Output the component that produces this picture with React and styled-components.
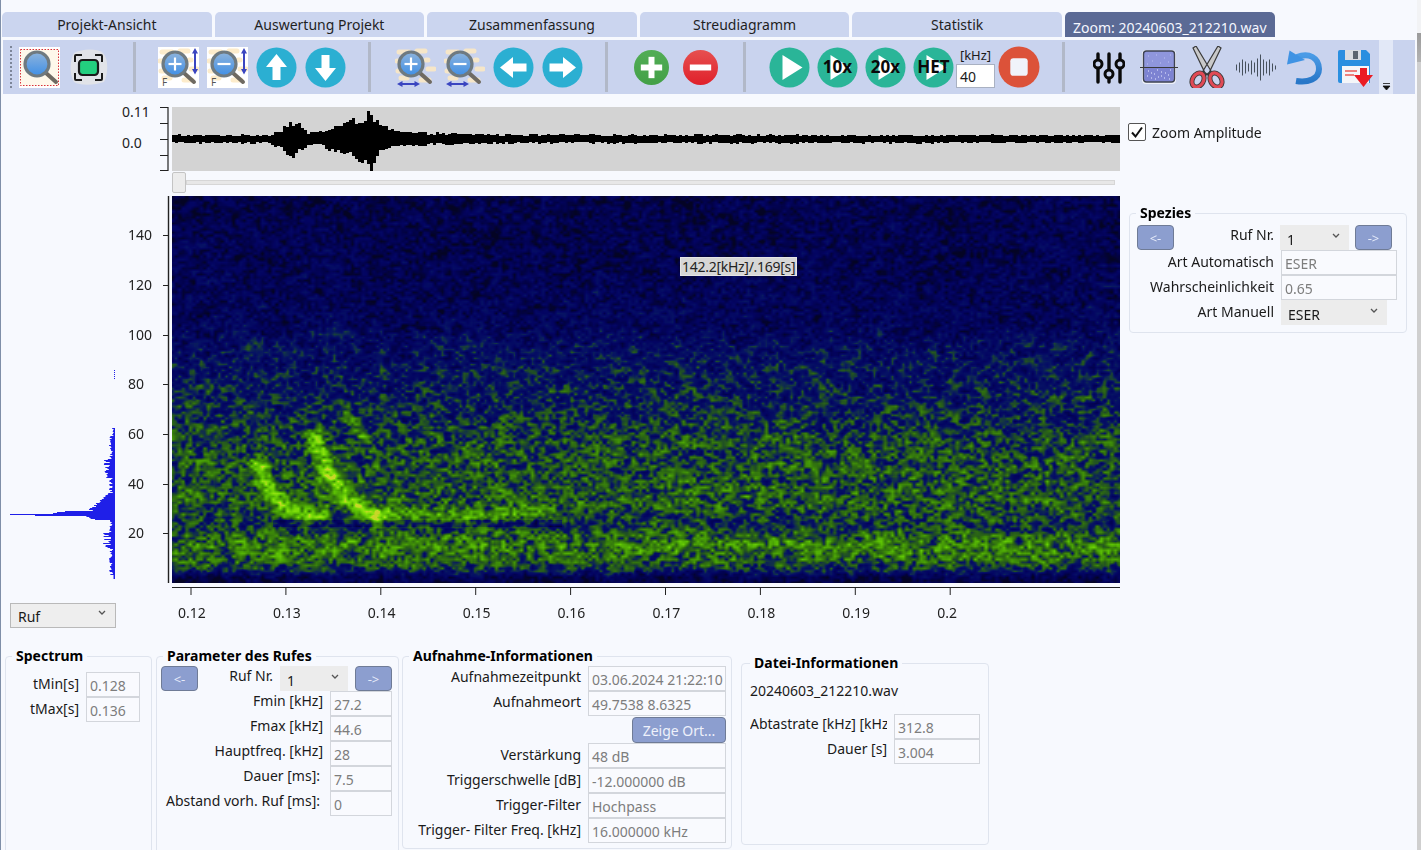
import React, { useEffect, useRef } from 'react'
import styled, { createGlobalStyle } from 'styled-components'

const GlobalStyle = createGlobalStyle`
  html, body {
    margin: 0;
    padding: 0;
    background: #f7f9fe;
  }
  * {
    box-sizing: border-box;
  }
`

const Page = styled.div`
  width: 1421px;
  height: 850px;
  overflow: hidden;
  display: flex;
`

const Win = styled.div`
  width: 1417px;
  height: 850px;
  overflow: hidden;
  display: flex;
  flex-direction: column;
  background: #f7f9fe;
  border-left: 1px solid #7f8fa8;
  font-family: "Noto Sans", "Open Sans", sans-serif;
  font-size: 14px;
  color: #1a1a1a;
`

const BackWindow = styled.div`
  flex: 1;
  background: linear-gradient(#f2f3f5 0, #f2f3f5 33px, #9b9b9b 33px, #b3b3b3 62px, #cfcfcf 62px, #cfcfcf 100%);
`

const TabRow = styled.div`
  display: flex;
  gap: 3px;
  padding: 12px 0 0 1px;
  height: 37px;
`

const Tab = styled.div`
  width: 209.6px;
  height: 25px;
  border-radius: 5px 5px 0 0;
  background: ${p => (p.$active ? '#5b6a95' : '#cbd5ef')};
  color: ${p => (p.$active ? '#f5f7ff' : '#1f1f1f')};
  display: flex;
  justify-content: center;
  align-items: ${p => (p.$active ? 'flex-end' : 'center')};
  line-height: 18px;
`

const Toolbar = styled.div`
  margin: 3px 0 0 2px;
  width: 1412px;
  height: 54px;
  background: #c9d3ee;
  display: flex;
  align-items: center;
  padding-left: 7px;
`

const Grip = styled.div`
  width: 2px;
  height: 42px;
  border-left: 2px dotted #7d8699;
`

const Group = styled.div`
  display: flex;
  align-items: center;
  gap: ${p => p.$gap ?? 8}px;
  margin-left: ${p => p.$left ?? 0}px;
`

const Sep = styled.div`
  width: 3px;
  height: 50px;
  background: #b1b8c8;
  margin-left: ${p => p.$left}px;
`

const Slot = styled.div`
  margin-right: ${p => p.$right ?? 0}px;
`

const Overflow = styled.div`
  width: 14px;
  height: 54px;
  background: #e2e8f7;
  margin-left: 6px;
  display: flex;
  align-items: flex-end;
  justify-content: center;
  padding-bottom: 3px;
`

const RateBox = styled.div`
  width: 39px;
  display: flex;
  flex-direction: column;
  align-items: center;
  font-size: 13px;
  line-height: 17px;
`

const RateInput = styled.div`
  width: 39px;
  height: 24px;
  background: #fff;
  border: 1px solid #a9b1c2;
  padding-left: 3px;
  line-height: 23px;
  font-size: 14px;
`

const Body = styled.div`
  display: grid;
  grid-template-columns: 171px 948px 1fr;
  grid-template-rows: 64px 25px 387px;
  margin-top: 13px;
`

const Wave = styled.canvas`
  display: block;
  width: 948px;
  height: 64px;
`

const SpectroWrap = styled.div`
  position: relative;
  width: 948px;
  height: 387px;
`

const Spectro = styled.canvas`
  display: block;
  width: 948px;
  height: 387px;
`

const Cursor = styled.div`
  position: absolute;
  left: 508px;
  top: 61px;
  height: 19px;
  padding: 0 1px;
  background: #d6d6d6;
  border: 1px solid #e4e4e4;
  color: #222;
  line-height: 17px;
  letter-spacing: -0.28px;
  white-space: nowrap;
`

const SliderRow = styled.div`
  display: flex;
  align-items: flex-start;
  padding-top: 1px;
`

const Thumb = styled.div`
  width: 14px;
  height: 21px;
  background: #ececec;
  border: 1px solid #c4c4c4;
  border-radius: 2px;
`

const Track = styled.div`
  width: 929px;
  height: 5px;
  margin-top: 8px;
  background: #e7e7e7;
  border: 1px solid #d6d6d6;
`

const ZoomCell = styled.label`
  display: flex;
  align-items: center;
  gap: 6px;
  padding: 16px 0 0 8px;
  height: 34px;
`

const CheckBox = styled.span`
  width: 18px;
  height: 18px;
  background: #fff;
  border: 1px solid #555;
  border-radius: 2px;
  display: flex;
  align-items: center;
  justify-content: center;
`

const LeftCell = styled.div`
  display: flex;
  padding-left: 9px;
`

const SpeciesCell = styled.div`
  grid-row: 3;
  grid-column: 3;
  padding: 8px 0 0 9px;
`

const Under = styled.div`
  display: grid;
  grid-template-columns: 171px 948px;
`

const RufCell = styled.div`
  padding: 20px 0 0 9px;
`

const Select = styled.div`
  width: ${p => p.$w}px;
  height: 25px;
  background: ${p => (p.$boxed ? '#eeeeee' : '#ececec')};
  border: ${p => (p.$boxed ? '1px solid #b9b9b9' : 'none')};
  display: flex;
  align-items: flex-end;
  justify-content: space-between;
  padding: 0 9px 0 7px;
  line-height: 20px;
`

const Chevron = styled.svg`
  width: 8px;
  height: 6px;
  margin-bottom: 11px;
`

const Panels = styled.div`
  display: flex;
  align-items: flex-start;
  margin-top: 19px;
  padding-left: 4px;
`

const Panel = styled.fieldset`
  margin: ${p => p.$top ?? 0}px 0 0 ${p => p.$left ?? 0}px;
  padding: 0;
  width: ${p => p.$w}px;
  height: ${p => p.$h}px;
  border: 1px solid #dfe4ee;
  border-radius: 4px;
  min-width: 0;
`

const PanelTitle = styled.legend`
  margin-left: ${p => p.$left ?? 6}px;
  padding: 0 4px;
  font-weight: 700;
  font-size: 14px;
  line-height: 18px;
  color: #000;
`

const Form = styled.div`
  display: grid;
  grid-template-columns: ${p => p.$cols};
  grid-auto-rows: auto;
  padding: ${p => p.$pad};
`

const Label = styled.div`
  height: 25px;
  text-align: right;
  line-height: 20px;
  padding-top: ${p => p.$top ?? 2}px;
  padding-right: ${p => p.$right ?? 7}px;
  white-space: nowrap;
`

const ClippedLabel = styled.div`
  height: 25px;
  margin: 0 7px 0 8px;
  line-height: 20px;
  white-space: nowrap;
  overflow: hidden;
`

const Field = styled.div`
  height: 25px;
  background: #f9fafe;
  border: 1px solid #d3d6dc;
  color: #7d7d7d;
  padding-left: 3px;
  line-height: 26px;
  white-space: nowrap;
  overflow: hidden;
`

const NavRow = styled.div`
  display: flex;
  align-items: flex-start;
  height: 25px;
`

const NavButton = styled.div`
  width: 37px;
  height: 25px;
  margin-left: ${p => p.$left ?? 0}px;
  background: #8c9ecf;
  border: 1px solid #6f7b96;
  border-radius: 4px;
  color: #e6ebfa;
  display: flex;
  align-items: center;
  justify-content: center;
  font-size: 13px;
  flex: none;
`

const NavLabel = styled.div`
  width: ${p => p.$w}px;
  margin-right: ${p => p.$right}px;
  text-align: right;
  line-height: 20px;
`

const ShowButton = styled.div`
  grid-column: 2;
  justify-self: end;
  width: 94px;
  height: 26px;
  margin-top: 1px;
  background: #8c9ecf;
  border: 1px solid #6f7b96;
  border-radius: 4px;
  color: #eef1fb;
  display: flex;
  align-items: center;
  justify-content: center;
`

const FileName = styled.div`
  padding: 9px 0 13px 8px;
  line-height: 20px;
`

// small seeded generator so the noise is the same every load
function makeRandom(seed) {
  let s = seed
  return () => {
    s = (s * 1664525 + 1013904223) % 4294967296
    return s / 4294967296
  }
}

function makeNoise(w, h, cellX, cellY, seed) {
  const rnd = makeRandom(seed)
  const cols = Math.ceil(w / cellX) + 2
  const rows = Math.ceil(h / cellY) + 2
  const grid = new Float32Array(cols * rows)
  for (let i = 0; i < grid.length; i++) grid[i] = rnd()
  return (x, y) => {
    const gx = x / cellX
    const gy = y / cellY
    const x0 = Math.floor(gx)
    const y0 = Math.floor(gy)
    const fx = gx - x0
    const fy = gy - y0
    const a = grid[y0 * cols + x0]
    const b = grid[y0 * cols + x0 + 1]
    const c = grid[(y0 + 1) * cols + x0]
    const d = grid[(y0 + 1) * cols + x0 + 1]
    return (a * (1 - fx) + b * fx) * (1 - fy) + (c * (1 - fx) + d * fx) * fy
  }
}

const colorStops = [
  [0.0, 4, 4, 36],
  [0.1, 2, 2, 74],
  [0.2, 3, 4, 98],
  [0.3, 6, 18, 100],
  [0.36, 16, 45, 78],
  [0.42, 30, 75, 40],
  [0.5, 45, 105, 18],
  [0.6, 62, 140, 8],
  [0.75, 90, 190, 4],
  [0.9, 130, 225, 10],
  [1.0, 200, 215, 40]
]

function colorAt(v) {
  const t = Math.max(0, Math.min(1, v))
  for (let i = 1; i < colorStops.length; i++) {
    if (t <= colorStops[i][0]) {
      const a = colorStops[i - 1]
      const b = colorStops[i]
      const f = (t - a[0]) / (b[0] - a[0])
      return [a[1] + (b[1] - a[1]) * f, a[2] + (b[2] - a[2]) * f, a[3] + (b[3] - a[3]) * f]
    }
  }
  return [200, 215, 40]
}

// level of the noise floor for a row, y counted from the top of the picture
const floorPoints = [
  [0, 0.11], [60, 0.12], [130, 0.17], [155, 0.25], [205, 0.33], [255, 0.42], [305, 0.45],
  [322, 0.39], [330, 0.37], [338, 0.46], [350, 0.55], [364, 0.48], [374, 0.33], [381, 0.12], [387, 0.08]
]

function floorAt(y) {
  for (let i = 1; i < floorPoints.length; i++) {
    if (y <= floorPoints[i][0]) {
      const a = floorPoints[i - 1]
      const b = floorPoints[i]
      return a[1] + ((b[1] - a[1]) * (y - a[0])) / (b[0] - a[0])
    }
  }
  return 0.08
}

// the calls, in picture coordinates: polyline points with width and strength
const calls = [
  { pts: [[85, 267], [98, 297], [115, 312], [135, 321], [148, 319]], w: 5.4, k: 0.42 },
  { pts: [[143, 242], [155, 274], [171, 299], [191, 314], [205, 319]], w: 6, k: 0.44 },
  { pts: [[173, 217], [196, 247]], w: 4, k: 0.17 },
  { pts: [[205, 319], [315, 319], [375, 314]], w: 5.5, k: 0.26 }
]

function distToCall(call, x, y) {
  let best = 1e9
  for (let i = 1; i < call.pts.length; i++) {
    const [ax, ay] = call.pts[i - 1]
    const [bx, by] = call.pts[i]
    const dx = bx - ax
    const dy = by - ay
    const t = Math.max(0, Math.min(1, ((x - ax) * dx + (y - ay) * dy) / (dx * dx + dy * dy)))
    const d = Math.hypot(x - ax - dx * t, y - ay - dy * t)
    if (d < best) best = d
  }
  return best
}

function drawSpectrogram(canvas) {
  const w = canvas.width
  const h = canvas.height
  const ctx = canvas.getContext('2d')
  const img = ctx.createImageData(w, h)
  const fine = makeNoise(w, h, 3.6, 3, 7)
  const mid = makeNoise(w, h, 7, 5, 21)
  const broad = makeNoise(w, h, 40, 24, 99)
  for (let y = 0; y < h; y++) {
    const base = floorAt(y)
    for (let x = 0; x < w; x++) {
      let v = base
      const n = fine(x, y) - 0.5
      const m = mid(x, y) - 0.5
      v += (n * 1.0 + m * 0.55) * (0.2 + base * 0.45)
      v += (broad(x, y) - 0.5) * 0.05
      for (const call of calls) {
        const d = distToCall(call, x, y)
        if (d < 18) v += call.k * Math.exp(-(d * d) / (2 * call.w * call.w)) * (0.92 + n * 0.2)
      }
      // bright knot where the second call meets the tail
      const knot = Math.hypot(x - 203, y - 318)
      if (knot < 8) v += 0.18 * (1 - knot / 8)
      // lower edge under the tail of the calls
      if (x > 100 && x < 390 && y > 323 && y < 331) v -= 0.1
      const [r, g, b] = colorAt(v)
      const i = (y * w + x) * 4
      img.data[i] = r
      img.data[i + 1] = g
      img.data[i + 2] = b
      img.data[i + 3] = 255
    }
  }
  ctx.putImageData(img, 0, 0)
  ctx.filter = 'blur(0.7px)'
  ctx.drawImage(canvas, 0, 0)
  ctx.filter = 'none'
}

const envelopePoints = [
  [0, 4.5], [60, 4], [95, 4.5], [107, 9], [115, 19], [125, 15], [133, 8], [142, 7], [152, 9], [163, 14],
  [173, 17], [183, 20], [190, 24], [198, 33], [205, 15], [225, 8], [250, 6.5], [300, 5], [400, 4.5], [948, 4]
]

function envelopeAt(x) {
  for (let i = 1; i < envelopePoints.length; i++) {
    if (x <= envelopePoints[i][0]) {
      const a = envelopePoints[i - 1]
      const b = envelopePoints[i]
      return a[1] + ((b[1] - a[1]) * (x - a[0])) / (b[0] - a[0])
    }
  }
  return 4
}

function drawWave(canvas) {
  const ctx = canvas.getContext('2d')
  const rnd = makeRandom(1234)
  ctx.fillStyle = '#d3d3d3'
  ctx.fillRect(0, 0, canvas.width, canvas.height)
  ctx.fillStyle = '#000'
  for (let x = 0; x < canvas.width; x += 3) {
    const a = Math.round(envelopeAt(x) * (0.65 + rnd() * 0.45))
    const b = Math.round(envelopeAt(x) * (0.65 + rnd() * 0.45))
    ctx.fillRect(x, 32 - a, 3, a + b)
  }
}

function drawSpectrum(canvas) {
  const ctx = canvas.getContext('2d')
  const rnd = makeRandom(4321)
  const right = 105
  ctx.fillStyle = '#1f1fe8'
  for (let y = 174; y < 183; y += 2) ctx.fillRect(right - 1, y, 1, 1)
  const lenAt = y => {
    if (y < 232) return 0
    if (y < 240) return 1 + rnd() * 2
    const d = y - 318
    if (d === 0) return 106
    if (d === 1) return 80
    if (d === -1) return 62
    if (d === -2) return 58
    if (d === -3) return 50
    if (d > 1 && d < 6) return 34 - d * 3 + rnd() * 4
    if (d < 0 && d > -10) return 26 + rnd() * 6 + d
    if (d < 0 && d > -22) return 4 + (22 + d) * 1.1 + rnd() * 3
    if (y > 262 && y < 282) return 5 + rnd() * 7
    if (y > 335 && y < 352) return 4 + rnd() * 8
    if (y > 378) return 1.5
    return 2 + rnd() * 4
  }
  for (let y = 232; y < 383; y++) {
    const len = lenAt(y)
    ctx.fillRect(right - len, y, len, 1)
  }
}

function Painted({ as: Tag, width, height, paint }) {
  const ref = useRef(null)
  useEffect(() => {
    paint(ref.current)
  }, [paint])
  return <Tag ref={ref} width={width} height={height} />
}

const SpectrumCanvas = styled.canvas`
  display: block;
  width: 106px;
  height: 387px;
  flex: none;
`

const AxisSvg = styled.svg`
  display: block;
  flex: none;
`

const axisText = { fontFamily: '"Noto Sans", "Open Sans", sans-serif', fontSize: 14, fill: '#222' }

function WaveAxis() {
  return (
    <AxisSvg width="170" height="66">
      <path d="M159 .5h8v63h-8M159 16.5h8M159 32.5h8M159 48.5h8" fill="none" stroke="#222" strokeWidth="1.2" />
      <text x="121" y="10" {...axisText}>0.11</text>
      <text x="121" y="41" {...axisText}>0.0</text>
    </AxisSvg>
  )
}

const freqTicks = [[140, 39], [120, 89], [100, 139], [80, 188], [60, 238], [40, 288], [20, 337]]

function FreqAxis() {
  return (
    <AxisSvg width="56" height="391">
      <path d="M52.5 0v387" stroke="#222" strokeWidth="1.4" />
      {freqTicks.map(([v, y]) => (
        <g key={v}>
          <path d={`M47 ${y}.5h6`} stroke="#222" />
          <text x="12" y={y + 5} {...axisText}>{v}</text>
        </g>
      ))}
    </AxisSvg>
  )
}

const timeTicks = ['0.12', '0.13', '0.14', '0.15', '0.16', '0.17', '0.18', '0.19', '0.2']

function TimeAxis() {
  return (
    <AxisSvg width="950" height="45">
      <path d="M0 4.5h948" stroke="#222" strokeWidth="1.2" />
      {timeTicks.map((t, i) => {
        const x = 19 + i * 94.9
        return (
          <g key={t}>
            <path d={`M${x} 4v8`} stroke="#222" />
            <text x={x - 13} y="35" {...axisText}>{t}</text>
          </g>
        )
      })}
    </AxisSvg>
  )
}

function Chev() {
  return (
    <Chevron viewBox="0 0 8 6">
      <path d="M1 1l3 3 3-3" fill="none" stroke="#555" strokeWidth="1.3" />
    </Chevron>
  )
}

// ---- toolbar drawings ----

const Ico = styled.svg`
  display: block;
  flex: none;
  width: ${p => p.$w ?? 41}px;
  height: ${p => p.$h ?? 41}px;
`

function Lens({ cx = 18, cy = 17, r = 12, sign }) {
  const id = `lens${cx}${sign === '-' ? 'm' : sign ? 'p' : 'n'}`
  return (
    <g>
      <defs>
        <linearGradient id={id} x1="0" y1="0" x2="0" y2="1">
          <stop offset="0" stopColor="#8fb4dc" />
          <stop offset="1" stopColor="#3f8fe6" />
        </linearGradient>
      </defs>
      <path d={`M${cx + r * 0.7} ${cy + r * 0.7}L${cx + 19} ${cy + 18}`} stroke="#6f6a62" strokeWidth="4" strokeLinecap="round" />
      <circle cx={cx} cy={cy} r={r} fill={`url(#${id})`} stroke="#6f7a80" strokeWidth="3.2" />
      {sign && <path d={`M${cx - 6.5} ${cy}h13`} stroke="#fff" strokeWidth="2.2" />}
      {sign === '+' && <path d={`M${cx} ${cy - 6.5}v13`} stroke="#fff" strokeWidth="2.2" />}
    </g>
  )
}

function ZoomArea() {
  return (
    <Ico viewBox="0 0 41 41">
      <rect width="41" height="41" fill="#fff" />
      <rect x="1" y="2" width="39" height="37" fill="#fdf3de" opacity=".6" />
      <rect x="1.5" y="2.5" width="38" height="36" fill="none" stroke="#d8303a" strokeWidth="1" strokeDasharray="1.5 1.5" />
      <Lens />
    </Ico>
  )
}

function FitScreen() {
  return (
    <Ico viewBox="0 0 41 41">
      <path d="M6 6c8-4 22-5 29 0 6 6 5 22 1 29-8 3-24 4-30 0C1 27 2 12 6 6z" fill="#e1e3e8" />
      <path d="M7 15V9q0-1 1-1h6M27 8h6q1 0 1 1v6M34 26v6q0 1-1 1h-6M14 33H8q-1 0-1-1v-6" fill="none" stroke="#1a1a1a" strokeWidth="2" />
      <rect x="11" y="13" width="19" height="15" rx="3.5" fill="#23cf7f" stroke="#1a1a1a" strokeWidth="2.2" />
    </Ico>
  )
}

const creamDots = 'M4 5h10M22 4h8M2 14h4M31 13h2M3 24h3M33 22h6M6 31h6M26 33h8'

function ZoomVertical({ sign }) {
  return (
    <Ico viewBox="0 0 41 41">
      <rect width="41" height="41" fill="#fff" />
      <path d={creamDots} stroke="#fdeccb" strokeWidth="5" strokeLinecap="round" />
      <Lens cx={17} cy={17} r={12} sign={sign} />
      <path d="M37 1l3 5.500h-2V22h2l-3 5.500-3-5.500h2V6.500h-2z" fill="#3a45c0" />
      <text x="4" y="39" fontFamily="Noto Sans, sans-serif" fontSize="10" fill="#555">F</text>
    </Ico>
  )
}

function ZoomHorizontal({ sign }) {
  return (
    <Ico viewBox="0 0 41 41">
      <path d={creamDots} stroke="#f6e6c8" strokeWidth="5" strokeLinecap="round" />
      <Lens cx={16} cy={17} r={12} sign={sign} />
      <path d="M2 37l5.500-3v2h12v-2l5.500 3-5.500 3v-2h-12v2z" fill="#3a45c0" />
    </Ico>
  )
}

function Round({ color, size = 41, children }) {
  return (
    <Ico $w={size} $h={size} viewBox="0 0 41 41">
      <circle cx="20.5" cy="20.5" r="20" fill={color} />
      {children}
    </Ico>
  )
}

const arrowPaths = {
  up: 'M20.5 7L31 20h-6.5v13h-8V20H10z',
  down: 'M20.5 34L31 21h-6.5V8h-8v13H10z',
  left: 'M7 20.5L20 10v6.5h13.5v8H20V31z',
  right: 'M34 20.5L21 10v6.5H7.5v8H21V31z'
}

function ArrowButton({ dir }) {
  return (
    <Round color="#2bafd2">
      <path d={arrowPaths[dir]} fill="#fff" />
    </Round>
  )
}

function SignButton({ sign }) {
  const id = sign === '+' ? 'plusFill' : 'minusFill'
  return (
    <Ico $w={35} $h={35} viewBox="0 0 41 41">
      <defs>
        <linearGradient id={id} x1="0" y1="0" x2="0" y2="1">
          <stop offset="0" stopColor={sign === '+' ? '#52ad55' : '#e65050'} />
          <stop offset="1" stopColor={sign === '+' ? '#43a047' : '#e0202a'} />
        </linearGradient>
      </defs>
      <circle cx="20.5" cy="20.5" r="20.5" fill={`url(#${id})`} />
      <path d="M8 20.5h25" stroke="#fff" strokeWidth="7" />
      {sign === '+' && <path d="M20.500 8v25" stroke="#fff" strokeWidth="7" />}
    </Ico>
  )
}

function PlayButton({ label }) {
  return (
    <Round color="#2ab598">
      <path d="M13.5 8l20 12.5-20 12.5z" fill="#fff" />
      {label && (
        <text x="20.5" y="26" textAnchor="middle" fontFamily="Noto Sans, sans-serif" fontWeight="700" fontSize="17" fill="#0a0a0a">{label}</text>
      )}
    </Round>
  )
}

function StopButton() {
  return (
    <Round color="#dc5239" size={42}>
      <rect x="12" y="12" width="17" height="17" rx="3" fill="#f0f3fa" />
    </Round>
  )
}

function SlidersIcon() {
  return (
    <Ico $w={32} viewBox="0 0 32 41">
      <path d="M5 7v28M16 7v28M27 7v28" stroke="#0a0a0a" strokeWidth="3.400" strokeLinecap="round" />
      <circle cx="5" cy="17" r="4" fill="#c9d3ee" stroke="#0a0a0a" strokeWidth="3" />
      <circle cx="16" cy="27" r="4" fill="#c9d3ee" stroke="#0a0a0a" strokeWidth="3" />
      <circle cx="27" cy="17" r="4" fill="#c9d3ee" stroke="#0a0a0a" strokeWidth="3" />
    </Ico>
  )
}

const speckTop = 'M8 9h1M16 8h1M24 11h1M12 14h1M28 15h1M20 16h1M7 17h1M30 8h1'
const speckBottom = 'M8 24h1M14 27h1M21 25h1M28 28h1M11 31h1M24 31h1M17 23h1M30 23h1M7 29h1M18 30h1M25 26h1M11 26h1M15 32h1M29 32h1M21 29h1'

function SpectroIcon() {
  return (
    <Ico $w={38} viewBox="0 0 38 41">
      <rect x="2" y="3" width="34" height="34" rx="4" fill="#fff" opacity=".7" />
      <rect x="3.500" y="4" width="31" height="31" rx="3" fill="#8f96dc" stroke="#3d4252" strokeWidth="1.400" />
      <rect x="5" y="20" width="28" height="14" fill="#7d83d2" />
      <path d={speckTop} stroke="#aeb3ea" strokeWidth="1.400" />
      <path d={speckBottom} stroke="#c6caf2" strokeWidth="1.400" />
      <path d="M0 20.5h38" stroke="#3a3a3a" strokeWidth="1" />
    </Ico>
  )
}

function ScissorsIcon() {
  return (
    <Ico $w={38} $h={42} viewBox="0 0 38 42">
      <path d="M5 2l3-2 15 25-5 4zM33 2l-3-2-15 25 5 4z" fill="#c9c9c9" stroke="#3a3a3a" strokeWidth="1.200" />
      <ellipse cx="10" cy="34" rx="5.500" ry="7.500" transform="rotate(30 10 34)" fill="none" stroke="#3a3a3a" strokeWidth="5" />
      <ellipse cx="10" cy="34" rx="5.500" ry="7.500" transform="rotate(30 10 34)" fill="none" stroke="#e04a55" strokeWidth="3.200" />
      <ellipse cx="28" cy="34" rx="5.500" ry="7.500" transform="rotate(-30 28 34)" fill="none" stroke="#3a3a3a" strokeWidth="5" />
      <ellipse cx="28" cy="34" rx="5.500" ry="7.500" transform="rotate(-30 28 34)" fill="none" stroke="#e04a55" strokeWidth="3.200" />
    </Ico>
  )
}

const soundBars = [3, 5, 8, 6, 4, 7, 5, 9, 13, 8, 6, 8, 4, 2]

function SoundIcon() {
  return (
    <Ico $w={41} viewBox="0 0 41 41">
      {soundBars.map((h, i) => (
        <path key={i} d={`M${1.5 + i * 3} ${20.5 - h}v${h * 2}`} stroke="#46505c" strokeWidth="1" />
      ))}
    </Ico>
  )
}

function UndoIcon() {
  return (
    <Ico $w={35} viewBox="0 0 35 41">
      <defs>
        <linearGradient id="undoFill" x1="0" y1="0" x2="0" y2="1">
          <stop offset="0" stopColor="#4a9be6" />
          <stop offset="1" stopColor="#2877c8" />
        </linearGradient>
      </defs>
      <path d="M10 10C22 5 32 11 32 22c0 10-11 14-23 12" fill="none" stroke="url(#undoFill)" strokeWidth="6" />
      <path d="M0 17.500L2.500 3.500 18 13z" fill="#3f93e4" />
    </Ico>
  )
}

function FloppyIcon() {
  return (
    <Ico $w={36} viewBox="0 0 36 41">
      <path d="M1 5a2 2 0 012-2h26l4 4v29H3a2 2 0 01-2-2z" fill="#2a8fe0" />
      <rect x="8" y="3" width="16" height="10" fill="#d8dde2" />
      <rect x="16" y="4" width="5" height="8" fill="#5b6670" />
      <rect x="5" y="19" width="27" height="17" fill="#f4f6f9" />
      <path d="M8 24h12M8 28h9" stroke="#ea5c55" strokeWidth="1.500" />
      <path d="M23 21h7v7h6l-9.500 12L17 28h6z" fill="#ea1c24" />
    </Ico>
  )
}

export default function App() {
  return (
    <Page>
      <GlobalStyle />
      <Win>
        <TabRow>
          <Tab>Projekt-Ansicht</Tab>
          <Tab>Auswertung Projekt</Tab>
          <Tab>Zusammenfassung</Tab>
          <Tab>Streudiagramm</Tab>
          <Tab>Statistik</Tab>
          <Tab $active>Zoom: 20240603_212210.wav</Tab>
        </TabRow>

        <Toolbar>
          <Grip />
          <Group $left={7}>
            <ZoomArea />
            <FitScreen />
          </Group>
          <Sep $left={24} />
          <Group $left={22}>
            <ZoomVertical sign="+" />
            <ZoomVertical sign="-" />
            <ArrowButton dir="up" />
            <ArrowButton dir="down" />
          </Group>
          <Sep $left={22} />
          <Group $left={24}>
            <ZoomHorizontal sign="+" />
            <ZoomHorizontal sign="-" />
            <ArrowButton dir="left" />
            <ArrowButton dir="right" />
          </Group>
          <Sep $left={22} />
          <Group $left={26} $gap={14}>
            <SignButton sign="+" />
            <SignButton sign="-" />
          </Group>
          <Sep $left={25} />
          <Group $left={23} $gap={7}>
            <PlayButton />
            <PlayButton label="10x" />
            <PlayButton label="20x" />
            <PlayButton label="HET" />
          </Group>
          <Group $left={2} $gap={3}>
            <RateBox>
              [kHz]
              <RateInput>40</RateInput>
            </RateBox>
            <StopButton />
          </Group>
          <Sep $left={22} />
          <Group $left={28} $gap={0}>
            <Slot $right={15}><SlidersIcon /></Slot>
            <Slot $right={10}><SpectroIcon /></Slot>
            <Slot $right={9}><ScissorsIcon /></Slot>
            <Slot $right={11}><SoundIcon /></Slot>
            <Slot $right={15}><UndoIcon /></Slot>
            <Slot><FloppyIcon /></Slot>
          </Group>
          <Overflow>
            <svg width="9" height="9" viewBox="0 0 9 9">
              <path d="M1 1.500h7M1 4h7l-3.500 4z" fill="#111" stroke="#111" strokeWidth=".8" />
            </svg>
          </Overflow>
        </Toolbar>

        <Body>
          <WaveAxis />
          <Painted as={Wave} width={948} height={64} paint={drawWave} />
          <ZoomCell>
            <CheckBox>
              <svg width="14" height="14" viewBox="0 0 14 14">
                <path d="M2 7.500l3.500 4L12 2.500" fill="none" stroke="#111" strokeWidth="2" />
              </svg>
            </CheckBox>
            Zoom Amplitude
          </ZoomCell>

          <div />
          <SliderRow>
            <Thumb />
            <Track />
          </SliderRow>
          <div />

          <LeftCell>
            <Painted as={SpectrumCanvas} width={106} height={387} paint={drawSpectrum} />
            <FreqAxis />
          </LeftCell>
          <SpectroWrap>
            <Painted as={Spectro} width={948} height={387} paint={drawSpectrogram} />
            <Cursor>142.2[kHz]/.169[s]</Cursor>
          </SpectroWrap>
          <SpeciesCell>
            <Panel $w={278} $h={129}>
              <PanelTitle>Spezies</PanelTitle>
              <Form $cols="1fr" $pad="3px 7px 0 7px">
                <NavRow>
                  <NavButton>&lt;-</NavButton>
                  <NavLabel $w={100} $right={6}>Ruf Nr.</NavLabel>
                  <Select $w={69}>1<Chev /></Select>
                  <NavButton $left={6}>-&gt;</NavButton>
                </NavRow>
              </Form>
              <Form $cols="144px 116px" $pad="0 0 0 7px">
                <Label>Art Automatisch</Label>
                <Field>ESER</Field>
                <Label>Wahrscheinlichkeit</Label>
                <Field>0.65</Field>
                <Label>Art Manuell</Label>
                <Select $w={106}>ESER<Chev /></Select>
              </Form>
            </Panel>
          </SpeciesCell>
        </Body>

        <Under>
          <RufCell>
            <Select $w={106} $boxed>Ruf<Chev /></Select>
          </RufCell>
          <TimeAxis />
        </Under>

        <Panels>
          <Panel $w={147} $h={210}>
            <PanelTitle>Spectrum</PanelTitle>
            <Form $cols="80px 54px" $pad="7px 0 0 0">
              <Label>tMin[s]</Label>
              <Field>0.128</Field>
              <Label>tMax[s]</Label>
              <Field>0.136</Field>
            </Form>
          </Panel>
          <Panel $left={4} $w={243} $h={210}>
            <PanelTitle>Parameter des Rufes</PanelTitle>
            <Form $cols="1fr" $pad="1px 0 0 4px">
              <NavRow>
                <NavButton>&lt;-</NavButton>
                <NavLabel $w={75} $right={7}>Ruf Nr.</NavLabel>
                <Select $w={68}>1<Chev /></Select>
                <NavButton $left={7}>-&gt;</NavButton>
              </NavRow>
            </Form>
            <Form $cols="173px 62px" $pad="0">
              <Label $top={0}>Fmin [kHz]</Label>
              <Field>27.2</Field>
              <Label $top={0}>Fmax [kHz]</Label>
              <Field>44.6</Field>
              <Label $top={0}>Hauptfreq. [kHz]</Label>
              <Field>28</Field>
              <Label $top={0} $right={10}>Dauer [ms]:</Label>
              <Field>7.5</Field>
              <Label $top={0} $right={10}>Abstand vorh. Ruf [ms]:</Label>
              <Field>0</Field>
            </Form>
          </Panel>
          <Panel $left={3} $w={330} $h={202}>
            <PanelTitle>Aufnahme-Informationen</PanelTitle>
            <Form $cols="185px 138px" $pad="1px 0 0 0">
              <Label $top={1}>Aufnahmezeitpunkt</Label>
              <Field>03.06.2024 21:22:10</Field>
              <Label $top={1}>Aufnahmeort</Label>
              <Field>49.7538 8.6325</Field>
              <ShowButton>Zeige Ort...</ShowButton>
              <Label>Verstärkung</Label>
              <Field>48 dB</Field>
              <Label>Triggerschwelle [dB]</Label>
              <Field>-12.000000 dB</Field>
              <Label>Trigger-Filter</Label>
              <Field>Hochpass</Field>
              <Label>Trigger- Filter Freq. [kHz]</Label>
              <Field>16.000000 kHz</Field>
            </Form>
          </Panel>
          <Panel $left={9} $top={7} $w={248} $h={191}>
            <PanelTitle $left={8}>Datei-Informationen</PanelTitle>
            <FileName>20240603_212210.wav</FileName>
            <Form $cols="152px 86px" $pad="0">
              <ClippedLabel>Abtastrate [kHz] [kHz]</ClippedLabel>
              <Field>312.8</Field>
              <Label $top={0}>Dauer [s]</Label>
              <Field>3.004</Field>
            </Form>
          </Panel>
        </Panels>
      </Win>
      <BackWindow />
    </Page>
  )
}
